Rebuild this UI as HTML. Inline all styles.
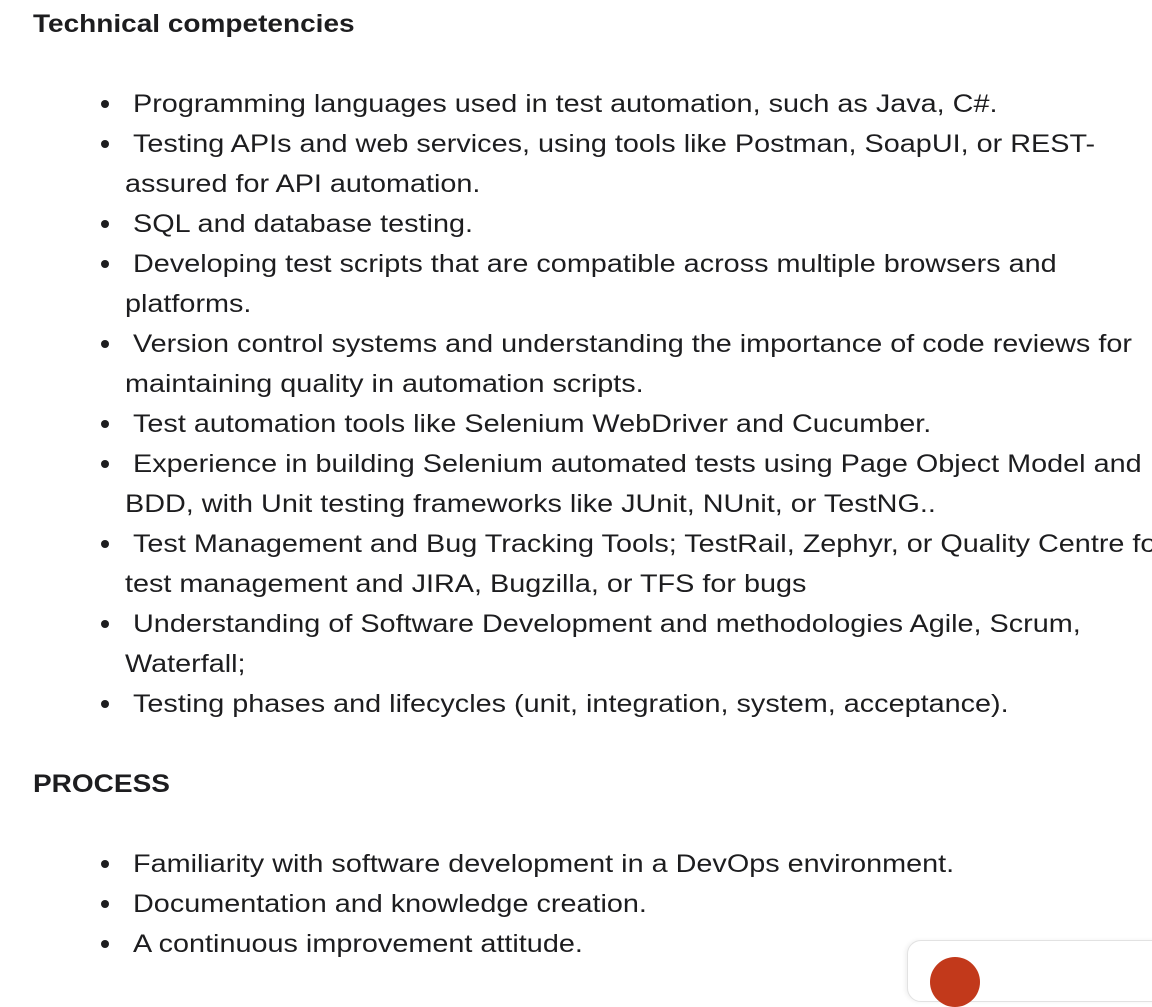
<!DOCTYPE html>
<html><head><meta charset="utf-8"><style>
body{margin:0;width:1152px;height:966px;overflow:hidden;background:#fff;position:relative;font-family:"Liberation Sans",Helvetica,Arial,sans-serif;color:#1d1d1f;}
.l{position:absolute;white-space:nowrap;font-size:25px;line-height:40px;transform:scaleX(1.152);transform-origin:0 0;}
.h{font-weight:bold;left:33px;transform:scaleX(1.12);}
.b{position:absolute;left:101px;width:8px;height:8px;border-radius:50%;background:#1d1d1f;}
.card{position:absolute;left:907px;top:940px;width:300px;height:60px;border:1px solid #e2e2e2;border-radius:14px;background:#fff;box-shadow:-2px 0 4px rgba(0,0,0,.06);}
.dot{position:absolute;left:930px;top:957px;width:50px;height:50px;border-radius:50%;background:#c2391b;}
</style></head><body>
<div class="l h" style="top:4px">Technical competencies</div>

<div class="b" style="top:100px"></div><div class="l" style="left:133px;top:84px">Programming languages used in test automation, such as Java, C#.</div>
<div class="b" style="top:140px"></div><div class="l" style="left:133px;top:124px">Testing APIs and web services, using tools like Postman, SoapUI, or REST-</div>
<div class="l" style="left:125px;top:164px">assured for API automation.</div>
<div class="b" style="top:220px"></div><div class="l" style="left:133px;top:204px">SQL and database testing.</div>
<div class="b" style="top:260px"></div><div class="l" style="left:133px;top:244px">Developing test scripts that are compatible across multiple browsers and</div>
<div class="l" style="left:125px;top:284px">platforms.</div>
<div class="b" style="top:340px"></div><div class="l" style="left:133px;top:324px">Version control systems and understanding the importance of code reviews for</div>
<div class="l" style="left:125px;top:364px">maintaining quality in automation scripts.</div>
<div class="b" style="top:420px"></div><div class="l" style="left:133px;top:404px">Test automation tools like Selenium WebDriver and Cucumber.</div>
<div class="b" style="top:460px"></div><div class="l" style="left:133px;top:444px">Experience in building Selenium automated tests using Page Object Model and</div>
<div class="l" style="left:125px;top:484px">BDD, with Unit testing frameworks like JUnit, NUnit, or TestNG..</div>
<div class="b" style="top:540px"></div><div class="l" style="left:133px;top:524px">Test Management and Bug Tracking Tools; TestRail, Zephyr, or Quality Centre for</div>
<div class="l" style="left:125px;top:564px">test management and JIRA, Bugzilla, or TFS for bugs</div>
<div class="b" style="top:620px"></div><div class="l" style="left:133px;top:604px">Understanding of Software Development and methodologies Agile, Scrum,</div>
<div class="l" style="left:125px;top:644px">Waterfall;</div>
<div class="b" style="top:700px"></div><div class="l" style="left:133px;top:684px">Testing phases and lifecycles (unit, integration, system, acceptance).</div>

<div class="l h" style="top:764px">PROCESS</div>

<div class="b" style="top:860px"></div><div class="l" style="left:133px;top:844px">Familiarity with software development in a DevOps environment.</div>
<div class="b" style="top:900px"></div><div class="l" style="left:133px;top:884px">Documentation and knowledge creation.</div>
<div class="b" style="top:940px"></div><div class="l" style="left:133px;top:924px">A continuous improvement attitude.</div>

<div class="card"></div><div class="dot"></div>
</body></html>
